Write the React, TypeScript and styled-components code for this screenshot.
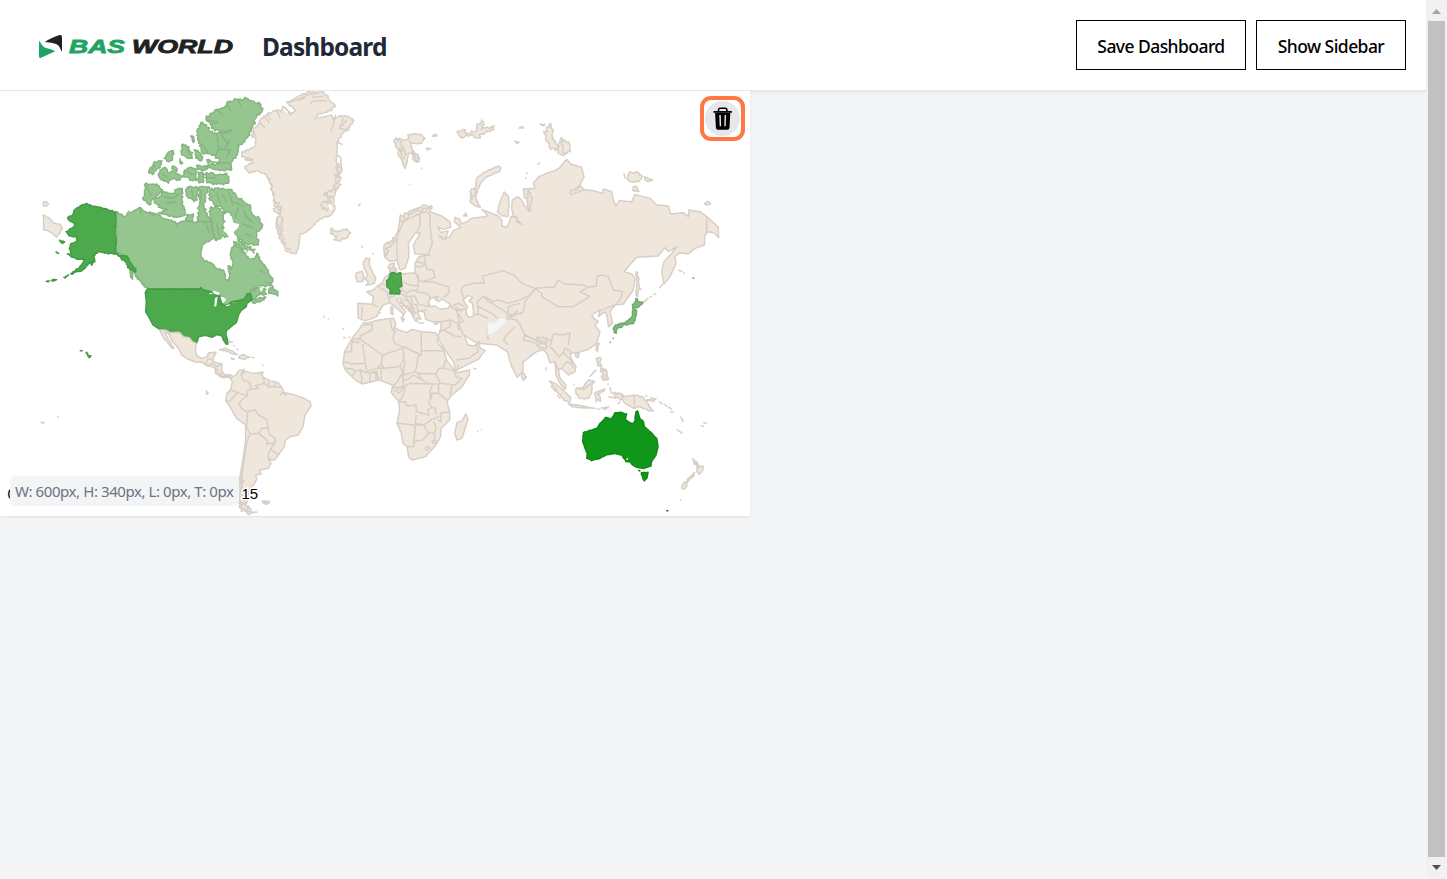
import React from 'react';
import styled, { createGlobalStyle } from 'styled-components';

const GlobalStyle = createGlobalStyle`
  * { box-sizing: border-box; }
  body { margin: 0; background: #f3f4f6; font-family: "Noto Sans", "Open Sans", sans-serif; overflow: hidden; }
`;

const Page = styled.div`
  display: flex;
  height: 879px;
  width: 1447px;
  background: #f3f4f6;
`;
const Main = styled.div`
  flex: 1;
  display: flex;
  flex-direction: column;
  min-width: 0;
`;
const Header = styled.header`
  height: 91px;
  display: flex;
  align-items: center;
  padding: 0 20px 1px 36px;
  background: #fff;
  border-bottom: 1px solid #e5e7eb;
  box-shadow: 0 1px 3px rgba(0, 0, 0, 0.07);
`;
const Logo = styled.svg`
  width: 200px;
  height: 30px;
  flex: none;
  margin-top: 2px;
`;
const Title = styled.h1`
  margin: 0 auto 0 26px;
  padding-top: 5px;
  font-size: 24.5px;
  line-height: 32px;
  font-weight: 700;
  letter-spacing: -0.85px;
  color: #1f2937;
`;
const Actions = styled.div`
  display: flex;
  gap: 10px;
`;
const ActionButton = styled.button<{ $width: number }>`
  width: ${(p) => p.$width}px;
  height: 50px;
  padding: 2px 0 0;
  border: 1px solid #000;
  background: #fff;
  color: #000;
  font: 500 17.5px "Noto Sans", "Open Sans", sans-serif;
  letter-spacing: -0.56px;
  white-space: nowrap;
`;
const Card = styled.section`
  position: relative;
  width: 750px;
  height: 425px;
  background: #fff;
  box-shadow: 0 1px 2px rgba(0, 0, 0, 0.08);
`;
const MapSvg = styled.svg`
  display: block;
  width: 750px;
  height: 425px;
`;
const SizeLabel = styled.div`
  position: absolute;
  left: 10px;
  bottom: 10px;
  width: 229px;
  height: 30px;
  padding: 0 5px;
  border-radius: 5px;
  background: #f3f4f6;
  color: #6b7280;
  font-size: 15px;
  line-height: 31px;
  letter-spacing: -0.42px;
  white-space: nowrap;
`;
const DeleteButton = styled.button`
  position: absolute;
  top: 5px;
  right: 5px;
  width: 45px;
  height: 45px;
  padding: 0;
  display: grid;
  place-items: center;
  border: 4px solid #ff7742;
  border-radius: 11px;
  background: #fff;
`;
const DeleteDisc = styled.span`
  display: grid;
  place-items: center;
  width: 35px;
  height: 35px;
  border-radius: 50%;
  background: #e5e7eb;
`;
const ScrollTrack = styled.div`
  width: 21px;
  display: flex;
  flex-direction: column;
  align-items: center;
  background: #f1f1f1;
`;
const ScrollArrow = styled.svg`
  width: 21px;
  height: 21px;
  flex: none;
`;
const ScrollThumb = styled.div`
  width: 17px;
  height: 836px;
  background: #c1c1c1;
`;

/* Adds small deterministic inlets along each edge of a coastline. */
function rough(d: string, amount: number): string {
  let seed = 7;
  const rnd = () => {
    seed = (seed * 16807) % 2147483647;
    return seed / 2147483647 - 0.5;
  };
  return d.replace(/M([^MZ]+)Z/g, (_m, body: string) => {
    const n = body.trim().split(/[ L]+/).map(Number);
    let out = '';
    const count = n.length / 2;
    for (let i = 0; i < count; i++) {
      const x = n[i * 2];
      const y = n[i * 2 + 1];
      const j = (i + 1) % count;
      const dx = n[j * 2] - x;
      const dy = n[j * 2 + 1] - y;
      const len = Math.hypot(dx, dy) || 1;
      const steps = Math.max(1, Math.round(len / 5));
      for (let s = 0; s < steps; s++) {
        const off = s === 0 ? 0 : rnd() * amount;
        const t = s / steps;
        out += `${out ? 'L' : 'M'}${(x + dx * t - (dy / len) * off).toFixed(1)} ${(y + dy * t + (dx / len) * off).toFixed(1)}`;
      }
    }
    return out + 'Z';
  });
}

type Tone = 'land' | 'canada' | 'usa' | 'japan' | 'australia' | 'empty' | 'water';
const tones: Record<Tone, [string, string]> = {
  land: ['#efe6dc', '#d7cec6'],
  canada: ['#96c690', '#86b481'],
  usa: ['#4caa4c', '#449a45'],
  japan: ['#7fba7a', '#6fa96c'],
  australia: ['#109618', '#0e8a16'],
  empty: ['#f5f5f5', '#e9e7e5'],
  water: ['#ffffff', '#d7cec6'],
};

interface ShapeProps { tone: Tone; d: string; r?: number; line?: boolean; bare?: boolean }
const Shape = ({ tone, d, r, line, bare }: ShapeProps) => (
  <path
    d={r ? rough(d, r) : d}
    fill={line ? 'none' : tones[tone][0]}
    stroke={bare ? 'none' : tones[tone][1]}
    strokeWidth={1.45}
    strokeLinejoin="round"
    vectorEffect="non-scaling-stroke"
  />
);
const Sheet = ({ x, y, children }: { x: number; y: number; children: React.ReactNode }) => (
  <g transform={`translate(${x} ${y}) scale(0.33333)`}>{children}</g>
);

const NorthAmerica = () => (
  <Sheet x={30} y={90}>
    <Shape tone="canada" r={6} d="M258 366L285 380L300 368L328 352L340 362L355 368L380 370L400 385L425 390L440 400L470 392L500 396L520 388L540 395L560 385L555 405L562 425L550 445L535 455L520 462L512 490L520 510L545 520L560 535L582 543L585 565L595 573L600 560L597 540L608 525L603 500L605 480L612 465L635 475L655 505L670 508L680 490L695 515L715 545L728 570L722 588L700 588L680 590L662 605L685 594L708 598L700 610L680 618L672 628L690 622L708 622L690 636L672 640L662 628L657 614L640 628L615 632L600 640L583 652L580 635L582 620L570 620L555 612L535 602L512 597L358 597L340 585L325 565L312 545L300 520L290 502L275 492L258 490Z" />
    <Shape tone="canada" r={9} d="M528 85L560 58L585 50L590 38L620 28L650 25L690 40L697 62L680 80L665 115L645 155L625 165L622 195L605 215L605 240L580 242L545 235L525 235L540 224L566 222L572 208L545 196L520 192L515 170L503 150L502 120L518 97L530 105L540 125L575 132L605 122L570 125L545 115Z" />
    <Shape tone="canada" r={7} d="M525 253L540 248L560 255L590 250L597 262L595 280L560 283L530 278ZM500 226L530 231L524 241L500 238ZM504 245L520 250L519 278L505 275ZM478 233L497 238L498 272L480 272L475 262L456 260L464 242ZM390 240L405 232L420 250L430 240L427 228L438 232L440 252L452 256L450 270L425 268L415 280L400 270L388 262ZM358 240L375 215L397 213L385 235L372 250L358 250ZM402 205L412 190L430 182L428 210L410 213ZM455 165L468 165L488 188L487 205L470 203L455 195ZM492 180L505 182L518 200L515 212L497 205ZM482 138L492 142L490 158ZM450 206L458 220L452 222ZM530 210L542 212L535 222Z" />
    <Shape tone="canada" r={7} d="M345 282L365 284L380 282L398 300L385 315L368 328L358 345L340 330ZM375 325L395 318L397 306L430 310L440 298L457 295L455 330L462 350L465 375L440 382L415 378L385 368L412 358L385 352L388 345L375 340ZM470 295L485 290L502 292L502 330L492 335L472 320ZM508 290L538 290L526 318L522 345L528 368L545 395L505 395L506 350ZM470 375L490 372L488 394L468 394Z" />
    <Shape tone="canada" r={9} d="M540 300L560 295L605 298L620 320L650 340L662 350L668 375L685 380L697 410L680 430L685 465L660 462L635 455L620 435L613 425L628 405L605 400L602 368L585 370L575 350L555 345L540 330ZM540 355L560 350L582 372L585 395L575 415L592 422L604 440L575 440L560 452L548 430ZM605 445L630 455L650 468L675 478L672 490L640 478L615 462Z" />
    <Shape tone="canada" line d="M560 60L580 75M590 42L602 62M625 30L632 48M530 90L560 95M540 105L565 95M560 130L566 175L558 195M575 135L595 165M600 150L585 175M515 160L535 190M565 178L600 180L590 205M540 215L600 220M520 262L560 265M395 250L412 262M375 225L365 242M462 240L490 255M470 175L480 195M350 290L365 318M400 320L430 325L448 310M405 340L440 335M485 300L490 325M515 300L512 335M560 305L570 340M575 310L590 335M595 305L610 345M612 335L640 350M625 350L615 385M640 360L650 385M650 380L670 400M635 400L670 415M645 430L665 440M290 373L298 362M330 352L333 372M345 365L375 377M435 395L442 412M530 405L538 428M560 400L568 440M580 410L590 430M625 468L640 490M690 540L705 550M705 575L722 580M700 590L660 600M328 570L345 585M315 555L325 570" />
    <Shape tone="canada" r={4} d="M716 600L728 588L730 598L744 604L743 618L732 612L716 610ZM688 609L698 605L710 612L700 616Z" />
    <Shape tone="water" bare d="M585 372L605 378L610 398L628 402L626 412L612 425L608 440L625 454L604 452L590 430L580 422L590 400ZM652 480L668 485L672 500L660 506ZM572 462L582 458L584 468ZM688 594L702 588L694 607Z" />
    <Shape tone="canada" r={3} d="M594 528L600 528L600 536L594 536ZM300 545L308 548L308 568L301 560Z" />
    <Shape tone="usa" r={4} d="M257 366L232 358L208 352L185 348L170 340L150 348L135 358L130 372L113 384L118 392L137 400L132 410L108 425L118 438L142 440L138 455L122 462L118 478L125 490L112 492L140 508L162 508L158 520L148 532L132 545L155 543L175 522L195 510L190 498L205 485L225 490L240 490L257 492Z" />
    <Shape tone="usa" r={6} d="M257 490L275 498L290 497L305 522L317 537L316 546L300 540L285 515L265 498ZM180 515L195 515L186 526ZM88 450L104 456L98 460ZM78 486L86 490ZM102 562L116 555L106 564ZM64 572L80 569L72 573ZM49 574L58 573ZM122 550L134 546L126 553Z" />
    <Shape tone="land" r={3} d="M40 375L62 388L72 400L90 402L98 415L88 430L80 442L65 428L40 418ZM40 336L50 335L56 343L48 348L40 347Z" />
  </Sheet>
);

const CentralAmerica = () => (
  <Sheet x={30.3} y={270}>
    <Shape tone="usa" d="M350 58L510 57L512 52L514 58L540 65L552 72L572 80L577 105L590 106L605 95L625 92L642 88L650 72L660 70L666 88L650 100L648 110L632 122L625 135L618 158L605 168L588 182L587 195L592 210L593 222L588 223L580 212L575 198L560 194L545 202L525 196L505 200L499 219L487 215L477 203L460 200L447 187L420 188L405 180L388 178L368 165L358 145L346 125L348 95L345 68Z" />
    <Shape tone="water" bare d="M535 73L550 62L568 68L564 76L552 71ZM552 110L554 85L562 80L558 108ZM570 80L578 80L588 89L580 98L576 98ZM584 108L600 101L595 108ZM602 99L615 94L612 98Z" />
    <Shape tone="usa" line d="M350 58L512 57M540 65L550 70M565 78L570 108M600 98L642 88M345 65L354 70" />
    <Shape tone="land" d="M388 180L405 180L420 188L447 187L460 200L477 203L487 215L498 220L495 240L500 258L515 265L530 260L535 248L557 247L550 262L547 275L575 282L574 303L585 315L600 314L608 320L605 328L590 320L580 324L565 312L552 292L525 285L518 277L495 276L475 268L455 256L445 235L425 212L415 190L403 186L415 210L431 235L425 235L408 212L401 205Z" />
    <Shape tone="land" line d="M525 285L532 268L545 267M530 288L548 280L560 290L575 282M552 294L565 300M566 312L580 310" />
    <Shape tone="land" r={3} d="M568 240L585 235L605 243L622 253L605 252L590 243ZM628 258L638 254L658 262L640 268L625 264ZM602 264L612 267L606 268ZM595 213L606 216L597 217ZM528 362L534 370L528 373ZM33 457L42 458L36 460ZM699 693L718 695L706 703Z" />
    <Shape tone="land" line d="M663 262L672 264M610 225L614 230M618 236L624 240M696 284L699 288M688 307L698 307L697 314M80 440L85 441" />
    <Shape tone="usa" r={2} d="M168 247L173 253L168 251ZM172 256L182 257L177 263ZM150 242L156 242Z" />
  </Sheet>
);

const SouthAmerica = () => (
  <Sheet x={215} y={360}>
    <Shape tone="land" d="M0 25L10 38L22 50L34 46L48 54L62 45L72 32L88 28L82 40L92 34L115 40L135 38L145 52L165 62L190 68L200 82L207 98L232 103L262 112L285 125L288 138L270 165L264 200L250 225L225 230L210 242L208 260L190 285L178 300L160 297L168 310L160 325L135 330L138 342L122 345L125 358L118 372L105 385L100 410L95 430L88 432L72 425L75 395L75 350L85 290L92 240L92 195L65 175L45 140L32 122L35 105L48 85L52 65L44 50L20 52L2 40Z" />
    <Shape tone="land" r={12} d="M70 428L100 438L108 452L126 457L105 463L85 452L72 440ZM76 350L82 352L82 420L74 420ZM74 430L98 440L104 456L90 448ZM142 424L160 424L156 432L146 430Z" />
    <Shape tone="land" line d="M88 28L78 45L85 60L105 68L108 88L98 92L97 108L68 98L48 90L35 100M68 98L55 112L42 125L34 122M97 108L80 120L72 132L80 145L95 155L120 150L130 165L155 178L160 205L140 205L132 220L105 222L95 200L98 155M132 220L158 242L155 252L172 250L182 245L178 232L165 225L158 205M180 250L170 262L160 280L160 297M168 268L190 285M105 222L95 250L88 300L80 350L82 400L92 430M145 52L148 70L160 80L162 65M160 80L180 80L184 66M180 80L198 82M108 88L130 85L122 76L148 70M195 105L202 98L215 100L208 108" />
  </Sheet>
);

const Greenland = () => (
  <Sheet x={190} y={88}>
    <Shape tone="land" r={6} d="M155 195L195 175L197 150L185 145L190 125L205 108L215 90L235 75L262 65L275 72L280 55L300 80L318 68L305 55L290 42L310 35L335 20L360 11L400 12L415 25L415 35L437 55L420 68L390 76L375 92L400 86L425 76L430 95L455 84L475 85L492 98L475 120L460 135L445 155L440 185L440 235L445 270L440 300L430 330L435 365L425 380L380 400L360 425L330 440L328 465L317 498L290 490L275 465L262 430L260 400L272 370L252 345L248 310L240 280L230 260L205 248L180 255L165 238L190 222L165 214L190 214L155 206Z" />
    <Shape tone="land" line d="M220 82L238 105M208 102L225 120M232 78L242 96M262 68L270 90M277 55L305 82M285 58L305 80M295 43L325 35L350 22M318 38L345 30M345 22L385 16M360 45L375 38L410 38M365 28L400 25M437 80L430 110L422 130M460 90L448 122L480 125M470 95L455 115M195 145L192 130M440 162L458 170M438 200L452 208L455 250L435 238M432 258L450 278L428 300M405 315L435 320L415 330L425 345L400 340M396 365L420 355L405 350M415 350L420 362M262 345L248 338M255 362L275 355L265 380M263 400L280 392L265 415M268 425L282 430M270 440L285 455M275 455L290 470M285 480L305 485M232 268L248 300M240 300L255 320" />
    <Shape tone="land" r={14} d="M440 235L452 232L454 255L442 260ZM436 262L450 265L446 300L434 305ZM405 315L432 305L433 325L412 332ZM396 345L420 338L410 368L396 360ZM262 390L274 385L276 440L265 438ZM255 348L268 345L268 375L256 372Z" />
    <Shape tone="land" r={8} d="M422 422L440 432L470 422L482 435L470 450L445 458L430 455L440 445L422 438Z" />
    <Shape tone="land" line d="M504 354L512 348M514 475L518 478M546 496L550 498" />
    <Shape tone="water" bare d="M374 91L398 78L425 72L428 78L400 84ZM413 348L424 352L428 362L419 365ZM277 58L280 65L296 80L292 70Z" />
  </Sheet>
);

const Eurasia = () => (
  <Sheet x={335} y={110}>
    <Shape tone="land" d="M270 287L290 292L285 305L320 318L345 335L347 352L325 358L308 350L318 368L340 362L332 385L312 378L325 390L345 380L355 362L378 352L358 335L360 322L375 328L378 342L395 335L410 325L450 320L458 316L440 298L460 306L490 318L500 330L501 348L513 352L522 340L528 320L545 320L545 335L560 343L535 318L530 295L532 270L548 260L560 270L577 300L584 304L580 270L568 262L565 237L600 235L595 218L612 200L640 188L660 182L675 172L695 148L707 162L740 172L747 200L735 225L705 250L740 238L775 242L802 250L805 237L830 245L835 270L843 288L853 272L890 275L900 253L945 265L965 285L1000 288L1007 312L1045 308L1060 320L1062 300L1095 305L1115 320L1138 340L1150 352L1151 383L1137 368L1120 365L1110 375L1108 405L1080 415L1060 432L1035 428L1020 440L1023 460L1005 500L987 522L980 485L987 455L1010 430L1025 410L1000 425L990 413L970 438L905 442L867 485L890 492L900 505L895 540L865 582L840 585L825 605L833 640L820 650L817 620L810 605L790 620L795 600L770 615L777 625L790 635L779 645L795 665L785 700L760 718L730 728L705 730L710 748L723 770L720 785L700 795L680 775L670 780L675 805L693 825L690 838L675 820L663 795L660 755L645 758L635 730L625 720L605 725L565 755L563 785L547 802L530 770L517 725L500 715L485 705L460 703L430 700L410 690L388 675L398 705L418 708L432 695L435 713L450 722L430 748L385 770L362 782L355 755L330 720L315 695L308 680L318 655L318 635L290 635L272 628L268 608L260 602L247 606L258 628L245 625L248 635L240 632L230 610L215 595L200 580L198 565L185 568L195 585L212 605L200 625L205 612L180 590L165 578L145 585L135 600L125 620L105 628L90 632L70 625L68 580L112 583L115 560L95 545L115 540L125 530L140 520L150 502L165 490L163 465L178 460L175 475L182 485L200 492L240 488L240 460L252 440L285 434L240 432L235 405L250 380L255 368L240 370L220 400L222 440L210 475L195 480L185 450L165 455L148 440L148 405L175 390L190 360L195 325L235 300Z" />
    <Shape tone="land" r={12} d="M195 322L235 298L272 285L292 294L275 298L235 308L203 335ZM148 405L180 385L177 400L158 412L152 440ZM195 575L213 590L228 592L238 615L225 605ZM163 465L178 460L182 482L168 484Z" />
    <Shape tone="land" r={3} d="M488 308L492 285L500 262L508 246L520 258L522 290L518 320L502 318ZM407 265L412 245L422 232L425 205L445 188L490 168L498 175L493 185L455 200L440 215L430 235L422 265L436 292L422 288L405 275ZM178 90L195 85L200 92L222 88L218 75L235 72L260 74L270 85L260 100L235 100L225 95L230 115L240 130L254 145L247 157L235 150L230 128L220 130L217 155L210 175L200 150L190 135L192 115L182 110Z" />
    <Shape tone="land" r={11} d="M178 90L200 88L196 98L206 115L190 120L182 110ZM365 66L385 58L392 70L420 65L425 45L440 30L447 45L438 58L478 48L470 60L440 72L430 84L395 74L380 84ZM230 125L250 135L252 155L240 150ZM408 240L420 235L420 255L412 268ZM190 118L210 122L208 145L198 140Z" />
    <Shape tone="land" r={3} d="M670 105L680 82L697 122L685 137L668 128ZM552 54L562 50L566 54ZM540 93L552 97L546 101ZM615 42L630 43L623 48ZM292 78L302 72L306 77ZM274 115L288 116L276 119ZM385 318L392 308L396 318ZM875 205L885 185L895 190L905 185L922 200L912 215L885 215ZM928 200L940 205L953 210L940 215L930 210ZM895 230L903 228L912 245L893 242ZM1108 282L1118 274L1127 281L1115 286Z" />
    <Shape tone="land" line d="M258 176L261 173M223 222L226 223M572 190L578 190M570 204L575 206M70 287L76 282M81 408L84 411M112 431L115 432M608 164L615 158M867 190L870 205" />
    <Shape tone="land" r={10} d="M628 72L645 40L655 60L652 88L662 95L670 112L660 122L645 112L632 90ZM680 90L700 95L705 125L688 135ZM705 248L735 230L745 238L715 252ZM583 240L592 262L584 304L575 275Z" />
    <Shape tone="land" r={3} d="M85 460L92 445L105 447L102 462L110 480L122 505L118 520L92 526L100 515L88 505L98 495L88 478ZM65 488L82 484L86 500L82 515L66 515L62 502ZM168 590L174 592L174 614L167 610ZM198 623L208 627L203 635Z" />
    <Shape tone="land" line d="M132 608L138 608M250 638L268 640M295 641L312 638L300 645M22 656L28 656M-36 620L-30 622M-22 626L-18 628M24 682L32 684M40 683L45 681M415 775L424 777" />
    <Shape tone="land" line d="M205 335L188 375L185 420L188 450M205 335L225 325L255 310L255 345L245 370M255 310L275 305L285 315L285 350L292 400L280 432M240 455L270 460L270 440M240 470L260 470L272 460L275 478L295 480L300 502L265 515L250 510L240 485M250 492L250 528L225 525L200 515L197 495M250 528L245 545L235 540L215 548L200 540L200 520M265 515L295 515L310 522L340 530L342 550L325 562M245 545L275 550L285 560L280 590L250 582L240 558L212 560L215 548M212 565L225 580L245 585L250 605M180 550L175 560L160 562L155 545L130 530M165 578L160 562M112 583L130 590M82 590L80 625M140 520L152 528M198 550L212 560M225 580L230 600L245 610M250 605L275 600M163 475L175 475M163 488L178 486M205 572L218 570L228 585L240 600M228 562L232 578M387 565L378 540L385 528L415 520L448 520L442 498L475 490L505 482L540 498L560 520L600 535L585 555L560 568L520 580L490 570L475 575L445 558L427 575L430 608M430 590L470 610L500 635L520 615L560 610M445 558L455 570L500 598L520 612L520 590L555 580M600 535L622 552L620 560L670 590L715 590L765 560L735 545L760 532L745 525L690 522L670 510L660 530L602 535L570 575L565 605L530 620M760 532L785 528L785 515L785 500L800 495L820 500L835 540L863 545L855 570L840 585L795 602M548 602L520 625L500 640M455 655L460 690M410 615L430 612L460 625M520 625L545 630L560 650M540 650L515 675L505 690L520 705M555 645L570 675L610 695L650 690L655 672L685 675L705 668L700 705M570 675L565 690L605 700M610 690L625 715M650 690L645 710L660 725L672 740L685 728L708 750L715 775M685 728L690 715L710 725M660 755L670 780M680 775L695 755L715 765M458 655L490 648L513 622M370 610L385 635L368 640L345 630L320 635M365 600L370 622L375 650L385 675M368 640L372 660M345 630L345 650L315 665M325 660L360 678L380 680M362 750L400 745L430 725M425 700L430 725M345 590L365 600L395 597M345 590L370 580L390 590M360 590L380 605M1115 320L1115 370" />
    <Shape tone="land" r={9} d="M604 684L636 684L634 696L606 694ZM607 702L634 700L632 716L612 716Z" />
    <Shape tone="water" d="M287 590L280 578L288 564L310 560L300 568L312 575L320 567L345 582L340 595L315 597L300 588ZM384 570L400 556L414 562L402 572L412 580L415 600L415 620L400 622L392 605L398 590Z" />
    <Shape tone="usa" r={2} d="M166 490L178 488L184 492L197 488L199 512L201 528L190 534L196 544L194 552L164 551L166 538L156 532L155 512L160 508Z" />
    <Shape tone="empty" d="M456 642L465 636L478 636L490 625L512 622L514 636L502 650L488 662L470 676L458 672Z" />
    <Shape tone="land" r={4} d="M905 485L910 500L912 530L918 538L910 540L908 560L903 555L906 515L902 495ZM785 705L793 700L787 725L782 718ZM723 730L733 728L730 742L722 740ZM562 785L574 802L565 812L560 800Z" />
    <Shape tone="land" line d="M923 578L940 565M943 563L950 558M955 555L963 550M973 535L985 520M1030 480L1042 485M1045 487L1050 491M370 765L365 782" />
    <Shape tone="japan" r={3} d="M903 565L912 575L924 578L910 592L893 595L892 585L900 578ZM895 597L904 600L904 615L896 640L875 645L868 642L860 652L846 655L844 670L838 668L835 655L842 645L870 638L882 628L890 622Z" />
    <Shape tone="japan" line d="M833 686L836 683M824 695L827 698M1072 504L1078 505" />
  </Sheet>
);

const Africa = () => (
  <Sheet x={335.3} y={300}>
    <Shape tone="land" d="M85 68L100 68L130 60L175 55L182 72L178 82L190 90L215 98L230 88L258 95L300 98L310 110L305 125L325 150L335 182L355 208L365 218L403 210L402 225L380 260L350 285L335 305L343 335L343 360L318 385L315 412L302 435L270 470L230 480L220 470L215 440L203 430L198 400L185 370L193 330L190 305L168 278L172 255L145 245L130 240L80 252L60 240L30 210L23 190L28 155L50 115L70 90ZM392 342L398 358L380 415L365 420L358 400L365 368L380 362Z" />
    <Shape tone="land" line d="M85 75L110 72L110 90L75 108L75 118L142 165L200 145L205 155L205 178L192 200L145 205L138 190L140 178L142 165M75 115L52 118L50 125L70 128L70 118M50 125L48 155L28 157M82 132L90 190L50 192L25 185M90 190L95 215L125 205L140 190M30 205L52 207L60 215L50 230M60 215L75 210L92 218L103 220L105 248M75 210L80 235L78 250M103 220L125 213L128 238M103 220L122 218L122 240M138 205L138 240M125 205L138 205L145 205M175 82L180 95L172 110L178 130L215 145L258 165L258 95M200 145L215 140M165 60L168 82L175 95M258 152L325 152M258 165L248 170L245 195L240 215L205 225L205 200L210 190L205 178M195 200L202 218L190 238L175 260M240 215L248 220L302 222L310 205L325 205L330 180M248 220L260 240L280 252L310 252L315 248L305 230L302 222M325 205L355 212L362 230L380 235L360 255L315 250M202 240L215 240L235 225L260 240M202 225L205 260L172 265M205 260L225 250L280 252M310 252L310 280L285 280L285 270L292 255M310 280L335 300M345 285L350 258M285 280L285 295L280 310L290 322L300 325L302 345M290 322L278 330L280 345L243 335L242 315L215 318L210 305L190 305M343 335L315 340M243 345L240 370L265 375L290 358L312 350M185 370L240 375L235 440L215 440M240 375L265 375L280 400L298 400L302 385L295 365M280 400L262 420L235 425M298 400L298 420L302 425M315 340L318 365L308 360M185 280L198 275L202 262L210 265L200 295L190 300M175 272L188 272L188 262M268 445L275 438L282 443L276 450L268 448M290 422L300 420L300 430L292 430L290 422M283 285L290 285L288 295L283 293M426 392L428 396M436 389L439 388" />
  </Sheet>
);

const Oceania = () => (
  <Sheet x={500} y={300}>
    <Shape tone="australia" r={2} d="M250 398L290 385L300 370L318 352L335 357L345 338L360 337L380 342L376 358L397 372L404 365L408 335L413 333L420 355L430 365L433 380L450 395L470 415L474 440L468 465L455 485L453 498L430 506L410 502L398 495L390 485L378 485L365 465L345 460L318 465L300 475L275 482L260 475L262 460L248 425ZM424 518L444 517L440 535L433 543L428 535ZM500 632L504 632ZM416 511L420 513Z" />
    <Shape tone="water" bare d="M378 480L383 472L383 480Z" />
    <Shape tone="land" r={4} d="M148 244L165 250L190 270L212 292L208 308L190 298L168 270ZM228 266L250 262L265 240L284 244L275 258L275 278L265 296L238 295L228 282ZM205 313L230 315L260 320L285 325L255 324L215 320ZM283 282L292 275L315 268L308 275L292 283L300 290L302 304L294 298L288 306ZM288 175L302 172L298 190L305 200L295 198ZM302 205L318 208L324 240L310 240L304 232L312 225ZM340 278L365 282L372 290L400 285L430 292L445 312L460 332L445 332L420 320L400 325L375 310L368 298L350 290ZM440 300L455 298L468 296L460 305ZM270 230L288 210ZM578 477L588 485L597 498L611 500L608 512L597 523L590 514L595 502ZM584 518L578 532L565 542L555 566L545 565L550 552L570 532Z" />
    <Shape tone="land" line d="M402 287L404 326M228 265L250 268L275 250M152 258L168 275M172 285L182 296M290 326L300 329M302 325L328 320M325 290L350 295M330 262L335 282M450 292L468 298M435 287L442 289M478 305L488 313M492 312L502 320M505 320L515 328M510 335L522 335M541 350L551 366M530 388L547 400M602 376L612 380M610 368L620 370M540 598L544 600M138 202L138 212M324 250L324 256M220 252L224 255M310 330L325 322M352 312L362 305" />
    <Shape tone="land" r={10} d="M340 282L355 280L370 290L360 300L345 290ZM304 208L318 212L318 235L308 238ZM578 478L590 490L598 502L590 505Z" />
  </Sheet>
);

const WorldMap = () => (
  <MapSvg viewBox="0 91 750 425" role="img" aria-label="World map">
    <NorthAmerica />
    <CentralAmerica />
    <SouthAmerica />
    <Greenland />
    <Eurasia />
    <Africa />
    <Oceania />
    <g fontFamily="Liberation Sans, sans-serif" fontSize="15" fill="#000" stroke="#fff" strokeWidth="3" paintOrder="stroke">
      <text x="7.5" y="499">0</text>
      <text x="241.5" y="499">15</text>
    </g>
  </MapSvg>
);

const BrandLogo = () => (
  <Logo viewBox="36 31 200 30" aria-label="BAS World">
    <path d="M45 42C48 39.5 56 36.2 59.5 35.1Q62 34.5 62 37V51.5C60 49.5 60 45.5 56 44Q52 42.3 45 42Z" fill="#20221f" />
    <path d="M39 41C42 44 42 47 47 48.2Q52 49 55.3 51.3L41 57.7Q39 58.5 39 56.5Z" fill="#1fa463" />
    <g fontFamily="Liberation Sans, sans-serif" fontSize="18.8" fontWeight="700" fontStyle="italic" strokeWidth="0.8">
      <text x="69" y="53.3" textLength="56" lengthAdjust="spacingAndGlyphs" fill="#1fa463" stroke="#1fa463">BAS</text>
      <text x="132" y="53.3" textLength="101" lengthAdjust="spacingAndGlyphs" fill="#20221f" stroke="#20221f">WORLD</text>
    </g>
  </Logo>
);

const TrashIcon = () => (
  <svg width="20" height="24" viewBox="0.3 0.2 20 24">
    <path d="M5.8 5V3.2Q5.8 1.5 7.5 1.5H12.5Q14.2 1.5 14.2 3.2V5" fill="none" stroke="#000" strokeWidth="1.6" />
    <path d="M1.5 5.1H18.5" stroke="#000" strokeWidth="1.8" strokeLinecap="round" />
    <path fillRule="evenodd" d="M2.4 6H17.6L16.8 21Q16.6 23 14.8 23H5.2Q3.4 23 3.2 21ZM6.6 8.3L7 19.5H8.4L8.1 8.3ZM11.9 8.3L11.6 19.5H13L13.4 8.3Z" />
  </svg>
);

export default function App() {
  return (
    <>
      <GlobalStyle />
      <Page>
        <Main>
          <Header>
            <BrandLogo />
            <Title>Dashboard</Title>
            <Actions>
              <ActionButton $width={170}>Save Dashboard</ActionButton>
              <ActionButton $width={150}>Show Sidebar</ActionButton>
            </Actions>
          </Header>
          <Card>
            <WorldMap />
            <SizeLabel>W: 600px, H: 340px, L: 0px, T: 0px</SizeLabel>
            <DeleteButton aria-label="Delete">
              <DeleteDisc><TrashIcon /></DeleteDisc>
            </DeleteButton>
          </Card>
        </Main>
        <ScrollTrack>
          <ScrollArrow viewBox="0 0 21 21"><path d="M6 14L10.5 9L15 14Z" fill="#a3a3a3" /></ScrollArrow>
          <ScrollThumb />
          <ScrollArrow viewBox="0 0 21 21"><path d="M6 8L10.5 13L15 8Z" fill="#505050" /></ScrollArrow>
        </ScrollTrack>
      </Page>
    </>
  );
}
